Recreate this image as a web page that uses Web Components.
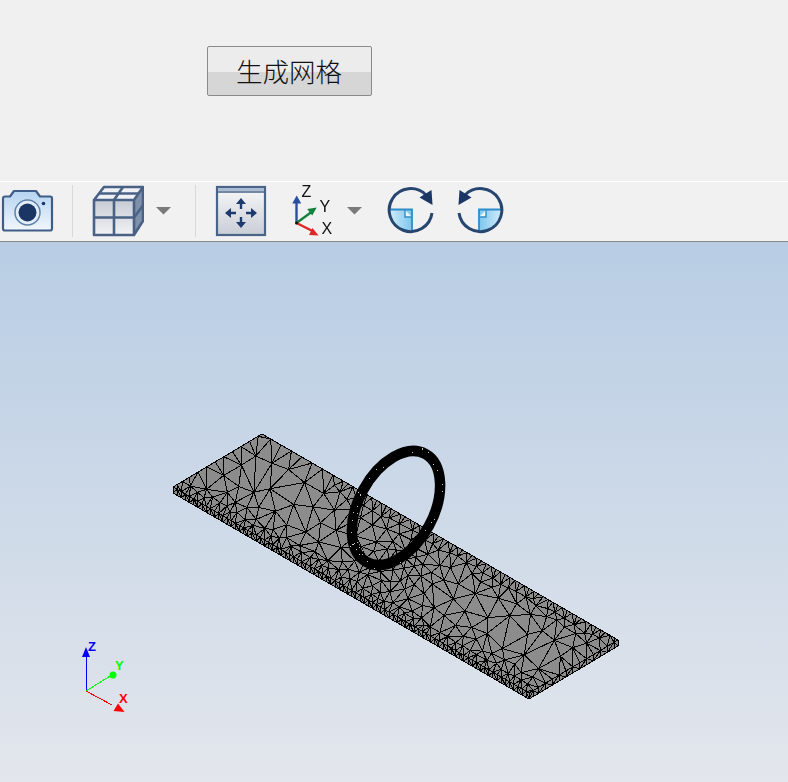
<!DOCTYPE html>
<html lang="zh">
<head>
<meta charset="utf-8">
<title>生成网格</title>
<style>
    html, body { margin: 0; padding: 0; background: #f0f0f0; }
    body { width: 788px; height: 782px; overflow: hidden; display: flex; flex-direction: column; }
</style>
</head>
<body>
<control-panel>
    <mesh-button>生成网格</mesh-button>
</control-panel>
<tool-bar>
    <tool-icon name="camera"></tool-icon>
    <tool-sep style="margin-left:18px"></tool-sep>
    <tool-icon name="cube" style="margin-left:19px"></tool-icon>
    <tool-icon name="caret" x="155" style="margin-left:11px"></tool-icon>
    <tool-sep style="margin-left:23px"></tool-sep>
    <tool-icon name="fit" style="margin-left:19px"></tool-icon>
    <tool-icon name="axes" style="margin-left:24px"></tool-icon>
    <tool-icon name="caret" x="346" style="margin-left:11px"></tool-icon>
    <tool-icon name="rotcw" style="margin-left:23px"></tool-icon>
    <tool-icon name="rotccw" style="margin-left:22px"></tool-icon>
</tool-bar>
<mesh-view></mesh-view>

<script>
class ControlPanel extends HTMLElement {
    constructor() {
        super();
        this.attachShadow({ mode: "open" });
        this.shadowRoot.innerHTML = `
            <style>
                :host { display: block; height: 181px; box-sizing: border-box; padding: 46px 0 0 207px; background: #f0f0f0; }
            </style>
            <slot></slot>
        `;
    }
}

class MeshButton extends HTMLElement {
    constructor() {
        super();
        this.attachShadow({ mode: "open" });
        this.shadowRoot.innerHTML = `
            <style>
                :host {
                    display: flex;
                    align-items: center;
                    justify-content: center;
                    box-sizing: border-box;
                    width: 165px;
                    height: 50px;
                    padding-right: 1px;
                    border: 1px solid #8a8a8a;
                    border-radius: 2px;
                    background: linear-gradient(#ececec 0, #ececec 25px, #d6d6d6 25px, #d6d6d6 100%);
                    color: #111;
                    font: 300 26.5px "Noto Sans CJK SC", sans-serif;
                    line-height: 48px;
                }
            </style>
            <slot></slot>
        `;
    }
}

class ToolBar extends HTMLElement {
    constructor() {
        super();
        this.attachShadow({ mode: "open" });
        this.shadowRoot.innerHTML = `
            <style>
                :host {
                    display: flex;
                    align-items: stretch;
                    height: 61px;
                    box-sizing: border-box;
                    border-top: 1px solid #fff;
                    border-bottom: 1px solid #8b8b8b;
                    background: #f1f1f1;
                }
            </style>
            <slot></slot>
        `;
    }
}

class ToolSep extends HTMLElement {
    constructor() {
        super();
        this.attachShadow({ mode: "open" });
        this.shadowRoot.innerHTML = `
            <style>
                :host { display: block; width: 1px; height: 52px; margin-top: 3px; background: #d9d9d9; }
            </style>
        `;
    }
}

// icons are drawn in page coordinates, so the viewBox starts where the icon sits
const ICONS = {
    camera: { x: 0, w: 54, svg: `
        <defs><linearGradient id="g" x1="0" y1="0" x2="0" y2="1"><stop offset="0" stop-color="#b5d3f0"/><stop offset="1" stop-color="#f2f7fc"/></linearGradient></defs>
        <path d="M5 196.500h5l4-5.500h22l4 5.500h10a2 2 0 0 1 2 2v30a2 2 0 0 1-2 2H5a2 2 0 0 1-2-2v-30a2 2 0 0 1 2-2z" fill="url(#g)" stroke="#3f5d86" stroke-width="2.200" stroke-linejoin="round"/>
        <circle cx="27.500" cy="212.500" r="12.500" fill="#e3eef8" stroke="#5f82a8" stroke-width="1.500"/>
        <circle cx="27.500" cy="212.500" r="9" fill="#1b3565"/>
        <circle cx="43.500" cy="203.500" r="1.800" fill="#1b3565"/>` },
    cube: { x: 92, w: 52, svg: `
        <defs><linearGradient id="g" x1="0" y1="0" x2="0" y2="1"><stop offset="0" stop-color="#c6cbd4"/><stop offset="1" stop-color="#f2f2f4"/></linearGradient></defs>
        <path d="M94 200l10-13h39l-9 13z" fill="#f0f1f4"/>
        <path d="M94 200h40v35H94z" fill="url(#g)"/>
        <path d="M134 200l9-13v34l-9 14z" fill="#7f90aa"/>
        <g fill="none" stroke="#4a6186" stroke-width="2.600" stroke-linejoin="round">
            <path d="M94 200l10-13h39v34l-9 14H94zM94 200h40l9-13M134 200v35"/>
            <path d="M114 200v35M94 217.500h40l9-12M114 200l9-13M99 193.500h39.500"/>
        </g>` },
    caret: { x: 0, w: 17, svg: "" },
    fit: { x: 215, w: 52, svg: `
        <defs><linearGradient id="g" x1="0" y1="0" x2="0" y2="1"><stop offset="0" stop-color="#f8f8f9"/><stop offset="1" stop-color="#c9cdd5"/></linearGradient></defs>
        <rect x="217" y="187" width="48" height="48" fill="url(#g)" stroke="#4a6488" stroke-width="2.200"/>
        <rect x="218" y="188" width="46" height="3" fill="#a9bcd4"/>
        <path d="M217 192h48" stroke="#4a6488" stroke-width="1.500"/>
        <g fill="#1c3a6b">
            <path d="M241 198l-5 6h3.800v5h2.400v-5h3.800z"/>
            <path d="M241 228l-5-6h3.800v-5h2.400v5h3.800z"/>
            <path d="M225 213l6-5v3.800h5v2.400h-5v3.800z"/>
            <path d="M257 213l-6-5v3.800h-5v2.400h5v3.800z"/>
        </g>` },
    axes: { x: 291, w: 44, svg: `
        <g fill="none" stroke-width="2.400">
            <path d="M296.500 223v-23" stroke="#2a4f9e"/>
            <path d="M296.500 223l15-11" stroke="#15803d"/>
            <path d="M296.500 223l16 8" stroke="#e02525"/>
        </g>
        <path d="M296.700 195.500l-4.500 8h9z" fill="#2a4f9e"/>
        <path d="M316.700 207.500l-9.500 1.500 5 6.500z" fill="#15803d"/>
        <path d="M318.500 235.500l-9.500-.5 3.500-7z" fill="#e02525"/>
        <circle cx="296.500" cy="223" r="1.500" fill="#111"/>
        <g font-family="'Liberation Sans', sans-serif" font-size="16" fill="#111">
            <text x="301.500" y="197">Z</text>
            <text x="319.500" y="211.500">Y</text>
            <text x="321.500" y="233.500">X</text>
        </g>` },
    rotcw: { x: 386, w: 48, svg: rotate() },
    rotccw: { x: 456, w: 48, svg: `<g transform="translate(891 0) scale(-1 1)">${rotate()}</g>` }
};

function rotate() {
    return `
        <defs><linearGradient id="g" x1="0" y1="0" x2="1" y2="0"><stop offset="0" stop-color="#d4ecfa"/><stop offset="1" stop-color="#7cc6ee"/></linearGradient></defs>
        <path d="M389 209.500h23v21a21.500 21.500 0 0 1-23-21z" fill="url(#g)"/>
        <path d="M389 209.500h23v21" fill="none" stroke="#2f8ccb" stroke-width="1.800"/>
        <path d="M405 210v7h7" fill="#eaf6fd" stroke="#2f8ccb" stroke-width="1.400"/>
        <path d="M426 195A21.500 21.500 0 1 0 432 213" fill="none" stroke="#27466f" stroke-width="3"/>
        <path d="M419.500 197.500l12-7.500 1 15z" fill="#1b3565"/>`;
}

class ToolIcon extends HTMLElement {
    connectedCallback() {
        const name = this.getAttribute("name");
        const icon = ICONS[name];
        const x = Number(this.getAttribute("x") || icon.x);
        const body = name === "caret"
            ? `<path d="M${x + 1} 207h15l-7.500 7.500z" fill="#7a7a7a"/>`
            : icon.svg;
        this.attachShadow({ mode: "open" });
        this.shadowRoot.innerHTML = `
            <style>
                :host { display: block; width: ${icon.w}px; height: 59px; }
                svg { display: block; filter: blur(0.45px); }
            </style>
            <svg width="${icon.w}" height="59" viewBox="${x} 182 ${icon.w} 59">${body}</svg>
        `;
    }
}

// small seeded generator, the mesh has to be the same on each run
function seeded(s) {
    return () => {
        s = (s * 1664525 + 1013904223) >>> 0;
        return s / 4294967296;
    };
}

// top face of the plate: A is the left corner, U runs along the length, V across
const A = [173, 487], U = [356, 206], V = [89, -53], THICK = 6;
const LEN_U = Math.hypot(U[0], U[1]), LEN_V = Math.hypot(V[0], V[1]);
const plate = (u, v) => [A[0] + u * U[0] + v * V[0], A[1] + u * U[1] + v * V[1]];

// target edge length in pixels, grows slowly away from the dense edges
function cellSize(u, v) {
    const center = Math.exp(-Math.pow((u - 0.5) / 0.2, 2));
    const base = 24 - 15 * center;
    const backEdge = u < 0.22 ? 12 : 5.5;
    return Math.min(
        base,
        4.8 + 0.3 * v * LEN_V,
        backEdge + 0.3 * (1 - v) * LEN_V,
        10 + 0.4 * u * LEN_U,
        8 + 0.4 * (1 - u) * LEN_U
    );
}

function edgePoints(len, at) {
    const out = [];
    let t = 0;
    while (t < 1 - 1e-6) {
        const p = at(t);
        out.push(p);
        t += cellSize(p.u, p.v) / len;
    }
    return out;
}

function buildPoints() {
    const rnd = seeded(20240);
    const front = edgePoints(LEN_U, t => ({ u: t, v: 0 }));
    const right = edgePoints(LEN_V, t => ({ u: 1, v: t }));
    const back = edgePoints(LEN_U, t => ({ u: t, v: 1 }));
    const left = edgePoints(LEN_V, t => ({ u: 0, v: t }));
    const all = [...front, ...right, ...back, ...left, { u: 1, v: 1 }];
    const pts = all.map(p => ({ ...p, s: plate(p.u, p.v) }));
    for (let i = 0; i < 60000; i++) {
        const u = rnd(), v = rnd();
        const s = plate(u, v);
        const h = cellSize(u, v) * 0.92;
        if (pts.every(q => Math.hypot(q.s[0] - s[0], q.s[1] - s[1]) > h)) pts.push({ u, v, s });
    }
    return { pts, front, right };
}

// plain Bowyer-Watson, good enough for some hundred points
function triangulate(points) {
    const n = points.length;
    const P = points.concat([[-3000, -3000], [5000, -3000], [400, 6000]]);
    let tris = [[n, n + 1, n + 2]];
    const inCircle = (t, p) => {
        const [a, b, c] = t.map(i => P[i]);
        const ax = a[0] - p[0], ay = a[1] - p[1];
        const bx = b[0] - p[0], by = b[1] - p[1];
        const cx = c[0] - p[0], cy = c[1] - p[1];
        const det = (ax * ax + ay * ay) * (bx * cy - cx * by)
            - (bx * bx + by * by) * (ax * cy - cx * ay)
            + (cx * cx + cy * cy) * (ax * by - bx * ay);
        const orient = (b[0] - a[0]) * (c[1] - a[1]) - (b[1] - a[1]) * (c[0] - a[0]);
        return orient > 0 ? det > 0 : det < 0;
    };
    for (let i = 0; i < n; i++) {
        const bad = [], keep = [];
        for (const t of tris) (inCircle(t, P[i]) ? bad : keep).push(t);
        const edges = new Map();
        for (const t of bad) {
            for (let k = 0; k < 3; k++) {
                const a = t[k], b = t[(k + 1) % 3];
                const key = a < b ? a + "_" + b : b + "_" + a;
                edges.set(key, edges.has(key) ? null : [a, b]);
            }
        }
        for (const e of edges.values()) if (e) keep.push([e[0], e[1], i]);
        tris = keep;
    }
    const lines = new Set();
    for (const t of tris) {
        if (t.some(i => i >= n)) continue;
        for (let k = 0; k < 3; k++) {
            const a = t[k], b = t[(k + 1) % 3];
            lines.add(a < b ? a + "_" + b : b + "_" + a);
        }
    }
    return [...lines].map(k => k.split("_").map(Number));
}

function meshPaths() {
    const { pts, front, right } = buildPoints();
    const xy = pts.map(p => p.s);
    const fmt = p => p[0].toFixed(1) + " " + p[1].toFixed(1);
    let top = "";
    for (const [a, b] of triangulate(xy)) top += `M${fmt(xy[a])}L${fmt(xy[b])}`;
    let side = "";
    const sideOf = list => {
        const s = list.map(p => plate(p.u, p.v));
        s.forEach((p, i) => {
            side += `M${fmt(p)}L${fmt([p[0], p[1] + THICK])}`;
            const q = s[i + 1];
            if (q) side += i % 2
                ? `M${fmt(p)}L${fmt([q[0], q[1] + THICK])}`
                : `M${fmt([p[0], p[1] + THICK])}L${fmt(q)}`;
        });
    };
    sideOf(front.concat([{ u: 1, v: 0 }]));
    sideOf(right.concat([{ u: 1, v: 1 }]));
    return { top, side };
}

class MeshView extends HTMLElement {
    connectedCallback() {
        const { top, side } = meshPaths();
        const c = { l: plate(0, 0), b: plate(1, 0), r: plate(1, 1), t: plate(0, 1) };
        const pt = p => p[0] + "," + p[1];
        const down = p => [p[0], p[1] + THICK];
        const face = [c.l, c.t, c.r, c.b].map(pt).join(" ");
        const outline = [c.l, c.t, c.r, down(c.r), down(c.b), down(c.l)].map(pt).join(" ");

        const rnd = seeded(77);
        let specks = "";
        for (let i = 0; i < 34; i++) {
            const a = rnd() * Math.PI * 2, r = 0.92 + rnd() * 0.16;
            specks += `<rect x="${Math.round(Math.cos(a) * 61 * r)}" y="${Math.round(Math.sin(a) * 38 * r)}" width="1" height="1"/>`;
        }

        this.attachShadow({ mode: "open" });
        this.shadowRoot.innerHTML = `
            <style>
                :host { display: block; flex: 1; background: linear-gradient(#b8cde4, #e3e6ec); }
                svg { display: block; }
                text { font: bold 13px "Liberation Sans", sans-serif; }
            </style>
            <svg width="788" height="540" viewBox="0 242 788 540">
                <defs><clipPath id="top"><polygon points="${face}"/></clipPath></defs>
                <g shape-rendering="crispEdges">
                    <polygon points="${outline}" fill="#8c8c8c"/>
                    <path d="${side}" stroke="#000" fill="none"/>
                    <polygon points="${face}" fill="#8c8c8c"/>
                    <path d="${top}" stroke="#000" fill="none" clip-path="url(#top)"/>
                    <polygon points="${outline}" fill="none" stroke="#000"/>
                    <path d="M${pt(c.l)}L${pt(c.b)}L${pt(c.r)}" fill="none" stroke="#000"/>
                </g>
                <g transform="translate(396 508) rotate(-61.6)">
                    <ellipse rx="61.500" ry="37.500" fill="none" stroke="#000" stroke-width="10.500"/>
                    <g fill="#c8c8c8" shape-rendering="crispEdges">${specks}</g>
                </g>
                <g shape-rendering="crispEdges" fill="none">
                    <path d="M86 691V656" stroke="#0000ff"/>
                    <path d="M86 691L110 676" stroke="#00ff00"/>
                    <path d="M86 691L112 705" stroke="#ff0000"/>
                </g>
                <path d="M86 647l-4 10h8z" fill="#0000ff"/>
                <circle cx="113" cy="675" r="3.500" fill="#00ff00"/>
                <path d="M118 703.500l6.500 8.500-11-1z" fill="#ff0000"/>
                <text x="88" y="651" fill="#0000ff">Z</text>
                <text x="115" y="670" fill="#00ff00">Y</text>
                <text x="119" y="703" fill="#ff0000">X</text>
            </svg>
        `;
    }
}

customElements.define("control-panel", ControlPanel);
customElements.define("mesh-button", MeshButton);
customElements.define("tool-bar", ToolBar);
customElements.define("tool-sep", ToolSep);
customElements.define("tool-icon", ToolIcon);
customElements.define("mesh-view", MeshView);
</script>
</body>
</html>
